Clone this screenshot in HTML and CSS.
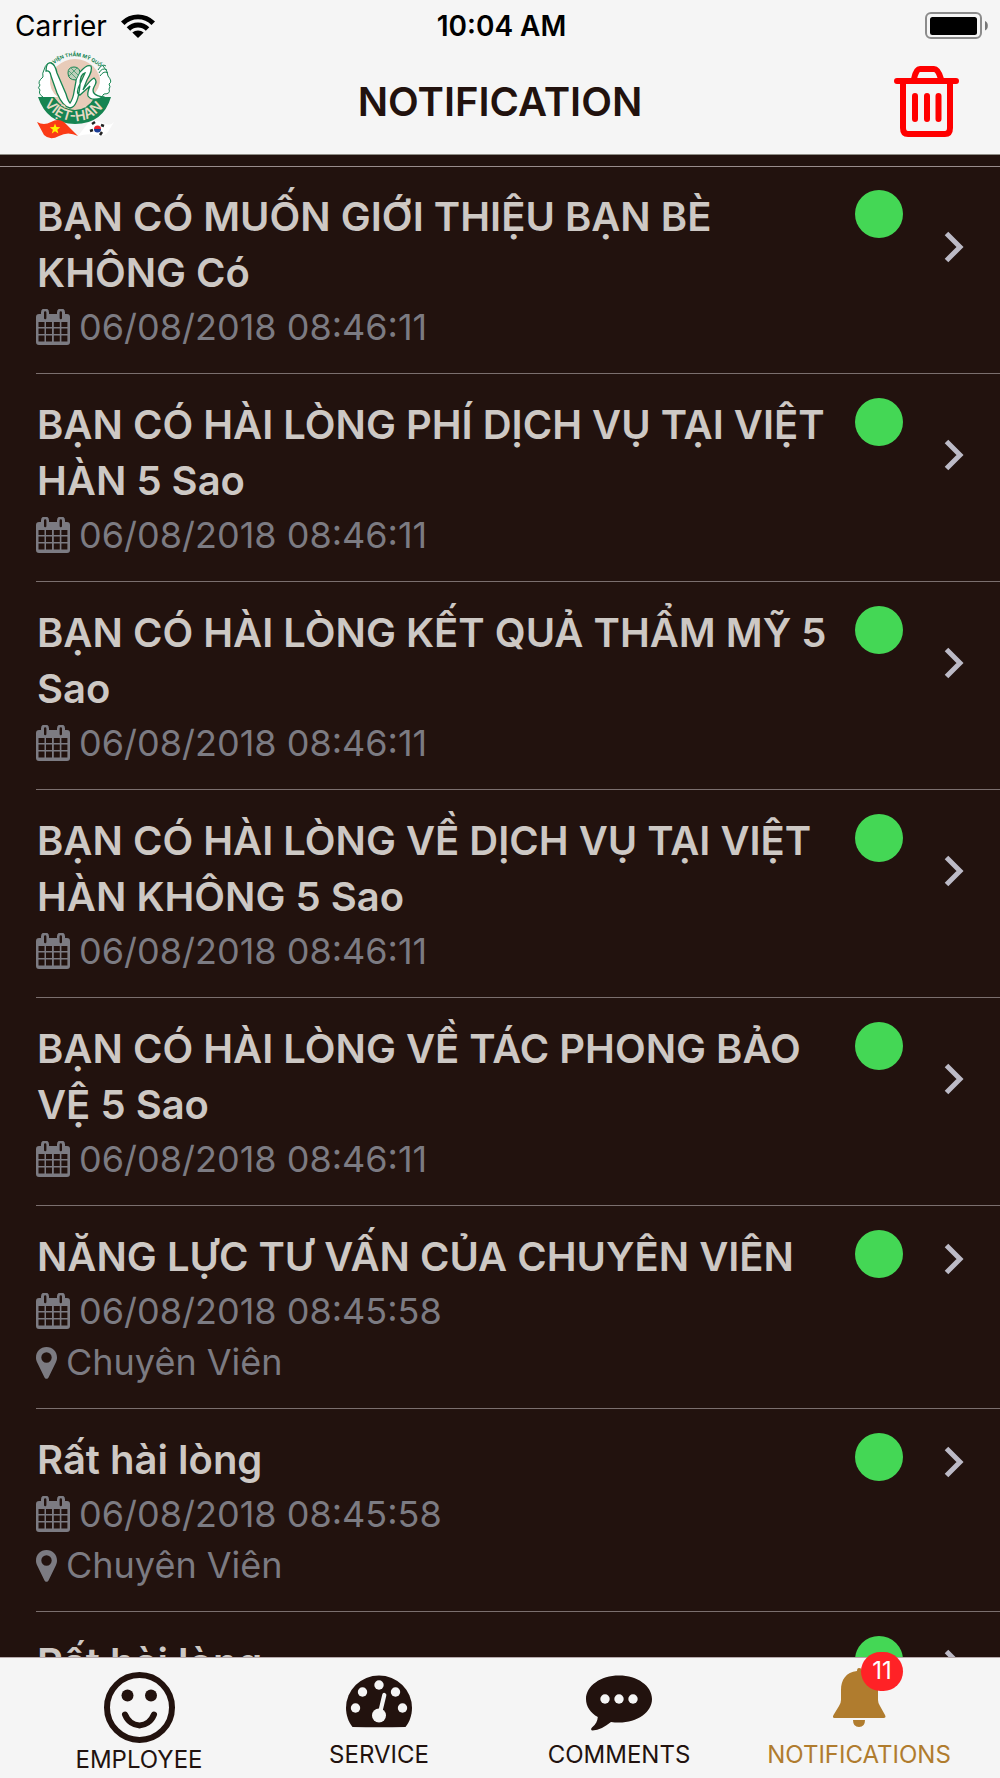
FILE: index.html
```html
<!DOCTYPE html>
<html lang="vi">
<head>
<meta charset="utf-8">
<meta name="viewport" content="width=device-width, initial-scale=1">
<title>Notification</title>
<link rel="stylesheet" href="styles.css">
</head>
<body>
<svg class="defs" aria-hidden="true">
  <symbol id="calendar" viewBox="0 0 34 36">
    <path fill-rule="evenodd" d="M3 5H5V3.500a3.500 3.500 0 0 1 8 0V5H21V3.500a3.500 3.500 0 0 1 8 0V5H31a3 3 0 0 1 3 3V33a3 3 0 0 1-3 3H3a3 3 0 0 1-3-3V8a3 3 0 0 1 3-3ZM8 3.500V9a1.200 1.200 0 0 0 2.400 0V3.500a1.200 1.200 0 0 0-2.400 0ZM23.600 3.500V9a1.200 1.200 0 0 0 2.400 0V3.500a1.200 1.200 0 0 0-2.400 0ZM2.500 13v5H8.500v-5ZM10 13v5h6v-5ZM17.800 13v5h6v-5ZM25.400 13v5h6v-5ZM2.500 19.500v5.500H8.500v-5.500ZM10 19.500v5.500h6v-5.500ZM17.800 19.500v5.500h6v-5.500ZM25.400 19.500v5.500h6v-5.500ZM2.500 26.600v5.800H8.500v-5.800ZM10 26.600v5.800h6v-5.800ZM17.800 26.600v5.800h6v-5.800ZM25.400 26.600v5.800h6v-5.800Z"/>
  </symbol>
  <symbol id="pin" viewBox="0 0 21 32">
    <path fill-rule="evenodd" d="M10.500 0C16.500 0 21 4.500 21 10.500c0 2-.4 3.300-1.200 5L12.500 30.500c-.8 1.700-3.200 1.700-4 0L1.200 15.500C.4 13.800 0 12.500 0 10.500 0 4.500 4.500 0 10.500 0Zm0 5.300a5.200 5.200 0 1 0 0 10.400 5.200 5.200 0 0 0 0-10.400Z"/>
  </symbol>
  <symbol id="chevron" viewBox="0 0 20 32">
    <path d="M2.500 2.500 16 16 2.500 29.500" fill="none" stroke="currentColor" stroke-width="5"/>
  </symbol>
</svg>
<div class="app">
  <div class="status">
    <span class="carrier">Carrier
      <svg class="wifi" viewBox="0 0 34 25" aria-hidden="true"><path d="M0 8.500A24 24 0 0 1 34 8.500L30.500 12A19 19 0 0 0 3.500 12ZM5.700 14.200A16 16 0 0 1 28.300 14.200L24.800 17.700A11 11 0 0 0 9.200 17.700ZM11.300 19.600A8.500 8.500 0 0 1 22.700 19.600L17 25Z"/></svg>
    </span>
    <span class="time">10:04 AM</span>
    <svg class="battery" viewBox="0 0 63 28" role="img" aria-label="Battery full"><rect x="1" y="1" width="55" height="25" rx="5" fill="none" stroke="#8b8b8b" stroke-width="2"/><rect x="5" y="5" width="47" height="18" rx="2.500"/><path d="M60 9q2.800 1 2.800 4.800T60 18.500Z" fill="#777"/></svg>
  </div>
  <header class="header">
    <svg class="logo" viewBox="0 0 78 86" role="img" aria-label="Viện Thẩm Mỹ Quốc Tế Việt-Hàn">
      <circle cx="38" cy="32" r="26" fill="#e8cbb9"/>
      <path d="M12 12Q5 17 6 24Q0 29 3 34Q0 37 4 44H21Q12 38 13 25Q14 17 12 12Z" fill="#fff"/>
      <path d="M62 12Q71 14 71 22L75 30Q72 32 73 36Q73 40 68 41L66 44H54Q64 36 63 24Z" fill="#fff"/>
      <path d="M7 17Q5 20 6 24Q0 29 3 32Q0 35 3 37Q1 41 6 44M7 17Q9 9 15 10M66 13Q71 18 71 23Q76 29 72 31Q74 34 72 36Q74 41 67 41Q65 42 66 44M61 17Q65 10 69 13M62 20Q65 14 70 17M63 23Q67 17 71 20" fill="none" stroke="#168451"/>
      <path d="M1 44H17Q26 57 38 57T58 44H74Q66 71 38 71T1 44Z" fill="#168451"/>
      <path d="M9 18Q9 9 14 10Q18 11 20 20L29 41Q31 48 33 50Q36 46 37 39L39 28Q38 22 44 18Q50 11 54 13Q56 17 50 27L46 37Q53 27 57 25Q61 28 57 34Q53 42 66 44Q55 49 51 43Q50 40 53 33L43 42Q38 41 43 31L48 20Q43 21 43 32Q41 54 33 55Q26 54 20 40L14 23Q13 17 9 18Z" fill="#fff" stroke="#168451" stroke-width="1.300"/>
      <path d="M31 20Q31 14 37 14Q42 14 43 19L39 27Q31 27 31 20Z" fill="#bfcfba" stroke="#168451"/>
      <path d="M32 18 39 25M34 15 41 22M32 23 40 15" stroke="#168451" stroke-width=".6"/>
      <path id="arc-top" d="M17 11Q38-6 63 14" fill="none"/>
      <path id="arc-bottom" d="M7 51Q20 68 38 68T70 50" fill="none"/>
      <text class="logo-motto"><textPath href="#arc-top">VIỆN THẨM MỸ QUỐC TẾ</textPath></text>
      <text class="logo-name"><textPath href="#arc-bottom">VIỆT-HÀN</textPath></text>
      <path d="M0 69Q7 73 14 69T27 69L41 83Q31 78 22 83T7 82Z" fill="#fb3b16"/>
      <path d="M18 70.500l1.400 3.600 3.900.1-3 2.500 1.100 3.800-3.400-2.200-3.200 2.200 1.100-3.700-3.100-2.500 3.900-.2Z" fill="#fff200"/>
      <path d="M41 83L51 70Q59 66 66 70T77 69L71 79Q67 84 59 82T41 83Z" fill="#fff"/>
      <path d="M57 76a3.500 3.500 0 0 1 7 0Z" fill="#e8202a"/><path d="M57 76a3.500 3.500 0 0 0 7 0Z" fill="#173a94"/>
      <path d="M55 71l3-2M53 78l3-1M64 72l3 1M63 82l2-3" stroke="#222" stroke-width="2.500"/>
    </svg>
    <h1 class="heading">NOTIFICATION</h1>
    <button class="trash" type="button" aria-label="Delete all">
      <svg viewBox="0 0 66 72" aria-hidden="true"><g fill="none" stroke="#f00" stroke-width="6" stroke-linecap="round" stroke-linejoin="round"><path d="M3 15H62M20 13Q22 3 26 3H40Q44 3 47 13M9 16V62Q9 68 14 68H51Q56 68 56 62V16"/><path d="M21 30V53M33 30V53M44.500 30V53"/></g></svg>
    </button>
  </header>
  <main class="content">
    <ul class="list">
      <li class="row"><div class="head"><h2 class="title">BẠN CÓ MUỐN GIỚI THIỆU BẠN BÈ KHÔNG Có</h2><span class="dot"></span><svg class="chevron"><use href="#chevron"/></svg></div><p class="meta"><svg class="calendar"><use href="#calendar"/></svg>06/08/2018 08:46:11</p></li>
      <li class="row"><div class="head"><h2 class="title">BẠN CÓ HÀI LÒNG PHÍ DỊCH VỤ TẠI VIỆT HÀN 5 Sao</h2><span class="dot"></span><svg class="chevron"><use href="#chevron"/></svg></div><p class="meta"><svg class="calendar"><use href="#calendar"/></svg>06/08/2018 08:46:11</p></li>
      <li class="row"><div class="head"><h2 class="title">BẠN CÓ HÀI LÒNG KẾT QUẢ THẨM MỸ 5 Sao</h2><span class="dot"></span><svg class="chevron"><use href="#chevron"/></svg></div><p class="meta"><svg class="calendar"><use href="#calendar"/></svg>06/08/2018 08:46:11</p></li>
      <li class="row"><div class="head"><h2 class="title">BẠN CÓ HÀI LÒNG VỀ DỊCH VỤ TẠI VIỆT HÀN KHÔNG 5 Sao</h2><span class="dot"></span><svg class="chevron"><use href="#chevron"/></svg></div><p class="meta"><svg class="calendar"><use href="#calendar"/></svg>06/08/2018 08:46:11</p></li>
      <li class="row"><div class="head"><h2 class="title">BẠN CÓ HÀI LÒNG VỀ TÁC PHONG BẢO VỆ 5 Sao</h2><span class="dot"></span><svg class="chevron"><use href="#chevron"/></svg></div><p class="meta"><svg class="calendar"><use href="#calendar"/></svg>06/08/2018 08:46:11</p></li>
      <li class="row"><div class="head"><h2 class="title">NĂNG LỰC TƯ VẤN CỦA CHUYÊN VIÊN</h2><span class="dot"></span><svg class="chevron"><use href="#chevron"/></svg></div><p class="meta"><svg class="calendar"><use href="#calendar"/></svg>06/08/2018 08:45:58</p><p class="meta place"><svg class="pin"><use href="#pin"/></svg>Chuyên Viên</p></li>
      <li class="row"><div class="head"><h2 class="title">Rất hài lòng</h2><span class="dot"></span><svg class="chevron"><use href="#chevron"/></svg></div><p class="meta"><svg class="calendar"><use href="#calendar"/></svg>06/08/2018 08:45:58</p><p class="meta place"><svg class="pin"><use href="#pin"/></svg>Chuyên Viên</p></li>
      <li class="row"><div class="head"><h2 class="title">Rất hài lòng</h2><span class="dot"></span><svg class="chevron"><use href="#chevron"/></svg></div></li>
    </ul>
  </main>
  <nav class="tabs">
    <a class="tab" href="#employee">
      <svg class="smiley" viewBox="0 0 71 71" aria-hidden="true"><circle cx="35.500" cy="35.500" r="32.500" fill="none" stroke="currentColor" stroke-width="6"/><circle cx="23.500" cy="23.500" r="6"/><circle cx="47" cy="23.500" r="6"/><path d="M21 42.500C27 57 44 57 50 42.500" fill="none" stroke="currentColor" stroke-width="6" stroke-linecap="round"/></svg>
      EMPLOYEE</a>
    <a class="tab" href="#service">
      <svg class="glyph" viewBox="0 0 66 61" aria-hidden="true"><path d="M6.500 50C2.500 45 0 38 0 31A33 32.500 0 0 1 66 31C66 38 63.500 45 59.500 50Q33 50.500 6.500 50Z"/><g fill="#f5f5f5"><circle cx="9.500" cy="31" r="4.700"/><circle cx="16.500" cy="15" r="4.700"/><circle cx="33" cy="8" r="4.700"/><circle cx="49.500" cy="15" r="4.700"/><circle cx="56.500" cy="31" r="4.700"/><circle cx="33" cy="38.500" r="7"/></g><path d="M33.500 38 38.300 18" stroke="#f5f5f5" stroke-width="4.200" stroke-linecap="round"/></svg>
      SERVICE</a>
    <a class="tab" href="#comments">
      <svg class="glyph" viewBox="0 0 66 61" aria-hidden="true"><path d="M33-1.500C51.500-1.500 66 9 66 22S51.500 45.500 33 45.500Q28.500 45.500 25 45C19 50 13 53 6.500 53.500 5 53.500 4.500 51.500 6 50.500 10 47 11.500 44 11.800 40C4.500 36 0 29.500 0 22 0 9 14.500-1.500 33-1.500Z"/><g fill="#f5f5f5"><circle cx="19" cy="22" r="4.700"/><circle cx="33" cy="22" r="4.700"/><circle cx="47" cy="22" r="4.700"/></g></svg>
      COMMENTS</a>
    <a class="tab active" href="#notifications">
      <span class="bell"><svg class="glyph" viewBox="0 0 66 61" aria-hidden="true"><path d="M33-9Q36-9 36-6C46-5 52 2 52 13V23Q52 26 54 29L59 38Q60.500 41 57.500 41H8.500Q6 41 7.500 38L13 29Q15 26 15 23V13C15 3 20-5 31-6Q31-9 33-9ZM27 43H39Q39 50 33 50T27 43Z"/></svg><span class="badge">11</span></span>
      NOTIFICATIONS</a>
  </nav>
</div>
</body>
</html>
```

FILE: styles.css
```css
* { box-sizing: border-box; }
body { margin: 0; background: #22120e; font-family: Inter, "Noto Sans", sans-serif; }
svg { display: block; fill: currentColor; flex: none; }
.defs { position: absolute; width: 0; height: 0; }
.app { display: flex; flex-direction: column; height: 100vh; }

.status { display: grid; grid-template-columns: 1fr auto 1fr; align-items: center; flex: none; height: 50px; padding: 1px 12px 0 15px; background: #f5f5f5; color: #000; font-size: 28px; line-height: 34px; }
.carrier { display: flex; align-items: center; gap: 14px; }
.wifi { width: 34px; height: 25px; }
.time { font-weight: 600; }
.battery { width: 63px; height: 28px; justify-self: end; }

.header { display: grid; grid-template-columns: 1fr auto 1fr; align-items: center; flex: none; height: 105px; padding: 0 37px; background: #f5f5f5; border-bottom: 1px solid #8f8d86; color: #22120e; }
.logo { width: 78px; height: 86px; margin-bottom: 12px; overflow: visible; }
.logo-motto { fill: #168451; font-size: 5px; font-weight: 700; }
.logo-name { fill: #e8d9c4; font-size: 14px; font-weight: 600; }
.heading { margin: 0; font-size: 40px; line-height: 56px; font-weight: 600; }
.trash { justify-self: end; margin-right: 3px; padding: 0; border: 0; background: none; }
.trash svg { width: 66px; height: 72px; }

.content { flex: 1; min-height: 0; padding-top: 11px; overflow-y: auto; scrollbar-width: none; }
.list { margin: 0; padding: 0 0 0 36px; list-style: none; box-shadow: inset 0 1px #988c8c; }
.row { padding: 23px 36px 20px 0; border-bottom: 1px solid #7b6f6e; color: #7c7b82; }
.head { display: flex; align-items: flex-start; }
.title { flex: 1; margin: 0; padding: 0 12px 0 1px; color: #cdc8c4; font-size: 40px; line-height: 56px; font-weight: 600; }
.dot { flex: none; width: 48px; height: 48px; margin: 1px 41px 0 0; border-radius: 50%; background: #44d755; }
.chevron { align-self: center; width: 20px; height: 32px; margin-top: 4px; color: #bcbac6; }
.meta { display: flex; align-items: center; gap: 9px; margin: 0; font-size: 36px; line-height: 52px; }
.place { line-height: 51px; }
.calendar { width: 34px; height: 36px; }
.pin { width: 21px; height: 32px; }

.tabs { display: flex; flex: none; padding: 14px 21px 3px 19px; background: #f5f5f5; border-top: 1px solid #b7a9ab; color: #22120e; }
.tab { display: flex; flex: 1; flex-direction: column; align-items: center; justify-content: center; gap: 2px; color: inherit; font-size: 24px; line-height: 30px; text-decoration: none; }
.smiley { width: 71px; height: 71px; }
.glyph { width: 66px; height: 61px; overflow: visible; }
.active { color: #b07c2e; }
.bell { position: relative; }
.badge { position: absolute; top: -25px; left: 35px; width: 42px; height: 39px; border-radius: 20px; background: #ff2226; color: #fff; line-height: 38px; text-align: center; }
```
